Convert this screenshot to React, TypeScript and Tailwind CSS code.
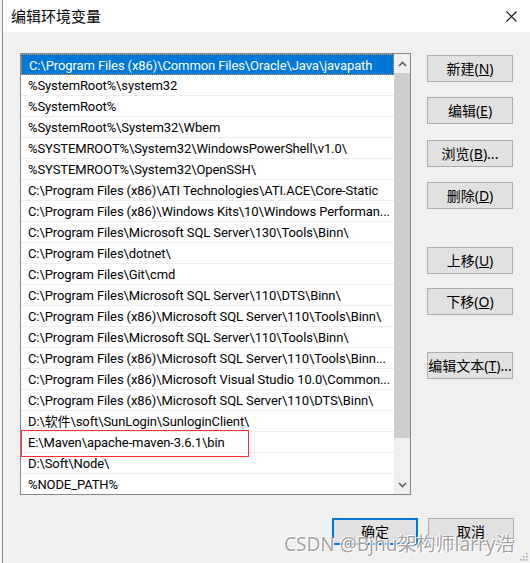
import { ReactNode } from "react";

const paths = [
  "C:\\Program Files (x86)\\Common Files\\Oracle\\Java\\javapath",
  "%SystemRoot%\\system32",
  "%SystemRoot%",
  "%SystemRoot%\\System32\\Wbem",
  "%SYSTEMROOT%\\System32\\WindowsPowerShell\\v1.0\\",
  "%SYSTEMROOT%\\System32\\OpenSSH\\",
  "C:\\Program Files (x86)\\ATI Technologies\\ATI.ACE\\Core-Static",
  "C:\\Program Files (x86)\\Windows Kits\\10\\Windows Performan...",
  "C:\\Program Files\\Microsoft SQL Server\\130\\Tools\\Binn\\",
  "C:\\Program Files\\dotnet\\",
  "C:\\Program Files\\Git\\cmd",
  "C:\\Program Files\\Microsoft SQL Server\\110\\DTS\\Binn\\",
  "C:\\Program Files (x86)\\Microsoft SQL Server\\110\\Tools\\Binn\\",
  "C:\\Program Files\\Microsoft SQL Server\\110\\Tools\\Binn\\",
  "C:\\Program Files (x86)\\Microsoft SQL Server\\110\\Tools\\Binn...",
  "C:\\Program Files (x86)\\Microsoft Visual Studio 10.0\\Common...",
  "C:\\Program Files (x86)\\Microsoft SQL Server\\110\\DTS\\Binn\\",
  "D:\\软件\\soft\\SunLogin\\SunloginClient\\",
  "E:\\Maven\\apache-maven-3.6.1\\bin",
  "D:\\Soft\\Node\\",
  "%NODE_PATH%",
];

const font = "font-['Noto_Sans','Noto_Sans_CJK_SC',sans-serif]";

function WinButton({
  children,
  className = "",
  primary = false,
}: {
  children: ReactNode;
  className?: string;
  primary?: boolean;
}) {
  return (
    <div
      className={`w-[86px] h-[27px] flex items-center justify-center bg-[#e1e1e1] text-[14px] text-black ${
        primary ? "border-2 border-[#0078d7]" : "border border-[#adadad]"
      } ${className}`}
    >
      {children}
    </div>
  );
}

function Chevron({ down = false }: { down?: boolean }) {
  return (
    <svg width="9" height="6" viewBox="0 0 9 6" className={down ? "rotate-180" : ""}>
      <path d="M1 5 L4.5 1.5 L8 5" fill="none" stroke="#606060" strokeWidth="1.6" />
    </svg>
  );
}

export default function App() {
  return (
    <div className={`w-[530px] h-[563px] flex overflow-hidden ${font}`}>
      {/* window behind */}
      <div className="w-[3px] bg-[#f3f3f3] border-r border-[#8a8a8a]" />

      <div className="flex-1 flex flex-col relative">
        {/* title bar */}
        <div className="h-[32px] bg-white flex items-center justify-between pl-[8px] pr-[13px]">
          <span className="text-[15px] text-black">编辑环境变量</span>
          <svg width="11" height="11" viewBox="0 0 11 11">
            <path d="M0.5 0.5 L10.5 10.5 M10.5 0.5 L0.5 10.5" stroke="#111" strokeWidth="1.1" />
          </svg>
        </div>

        {/* body */}
        <div className="flex-1 bg-[#f0f0f0] pl-[17px] pt-[21px] flex flex-col">
          <div className="flex">
            {/* path list */}
            <div className="relative w-[391px] h-[442px] border border-[#828790] bg-white flex overflow-hidden">
              <div className="flex-1 flex flex-col min-w-0">
                {paths.map((p, i) => (
                  <div
                    key={i}
                    className={`h-[21px] shrink-0 flex items-center pl-[7px] pt-[2px] text-[13px] tracking-[-0.1px] font-['Roboto','Noto_Sans_CJK_SC',sans-serif] whitespace-nowrap overflow-hidden ${
                      i === 0
                        ? "bg-[#0078d7] text-white border border-dotted border-[#e89a3c]"
                        : "text-black border-b border-[#ededed]"
                    }`}
                  >
                    {p}
                  </div>
                ))}
              </div>
              {/* scrollbar */}
              <div className="w-[16px] shrink-0 bg-[#f0f0f0] flex flex-col items-center">
                <div className="h-[19px] w-full flex items-center justify-center">
                  <Chevron />
                </div>
                <div className="w-full h-[365px] bg-[#cdcdcd]" />
                <div className="flex-1" />
                <div className="h-[18px] w-full flex items-center justify-center">
                  <Chevron down />
                </div>
              </div>
              {/* highlight around the maven entry */}
              <div className="absolute left-0 top-[376px] w-[228px] h-[27px] border border-[#ff2d2d]" />
            </div>

            {/* side buttons */}
            <div className="flex flex-col ml-[16px] pt-[2px]">
              <WinButton>
                新建(<span className="underline">N</span>)
              </WinButton>
              <WinButton className="mt-[15px]">
                编辑(<span className="underline">E</span>)
              </WinButton>
              <WinButton className="mt-[16px]">
                浏览(<span className="underline">B</span>)...
              </WinButton>
              <WinButton className="mt-[15px]">
                删除(<span className="underline">D</span>)
              </WinButton>
              <WinButton className="mt-[38px]">
                上移(<span className="underline">U</span>)
              </WinButton>
              <WinButton className="mt-[14px]">
                下移(<span className="underline">O</span>)
              </WinButton>
              <WinButton className="mt-[37px]">
                编辑文本(<span className="underline">T</span>)...
              </WinButton>
            </div>
          </div>

          {/* OK / Cancel */}
          <div className="flex gap-[10px] mt-[23px] ml-[312px]">
            <WinButton primary>确定</WinButton>
            <WinButton>取消</WinButton>
          </div>
        </div>

        {/* resize grip */}
        <svg width="10" height="10" viewBox="0 0 10 10" className="absolute right-[2px] bottom-[2px]">
          {[
            [8, 2],
            [5, 5],
            [8, 5],
            [2, 8],
            [5, 8],
            [8, 8],
          ].map(([x, y], i) => (
            <rect key={i} x={x} y={y} width="1.5" height="1.5" fill="#a0a0a0" />
          ))}
        </svg>

        {/* watermark */}
        <div className="absolute left-[281px] top-[530px] text-[19px] text-[#8c8c8c]/80 [text-shadow:1px_1px_0_#ffffff,-1px_-1px_0_#ffffff] whitespace-nowrap">
          CSDN @Bjhu架构师larry浩
        </div>
      </div>
    </div>
  );
}
